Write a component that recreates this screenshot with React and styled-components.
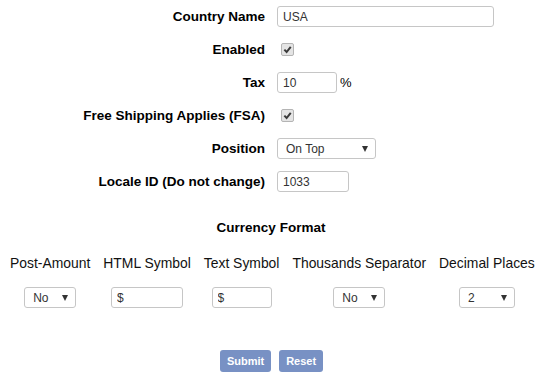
import styled, { createGlobalStyle } from "styled-components";

const Global = createGlobalStyle`
  body {
    margin: 0;
    background: #ffffff;
    color: #000000;
    font-family: "Liberation Sans", Arial, sans-serif;
  }
`;

export default function App() {
    return (
        <Page>
            <Global />
            <FieldGrid>
                <Label>Country Name</Label>
                <Control>
                    <TextInput $w={217} defaultValue="USA" />
                </Control>

                <Label>Enabled</Label>
                <Control>
                    <CheckBox />
                </Control>

                <Label>Tax</Label>
                <Control>
                    <TextInput $w={60} defaultValue="10" />
                    <Unit>%</Unit>
                </Control>

                <Label>Free Shipping Applies (FSA)</Label>
                <Control>
                    <CheckBox />
                </Control>

                <Label>Position</Label>
                <Control>
                    <Dropdown $w={99} value="On Top" options={["On Top", "On Bottom"]} />
                </Control>

                <Label>Locale ID (Do not change)</Label>
                <Control>
                    <TextInput $w={72} defaultValue="1033" />
                </Control>
            </FieldGrid>

            <SectionTitle>Currency Format</SectionTitle>

            <Columns>
                <Column>
                    <ColumnTitle>Post-Amount</ColumnTitle>
                    <Dropdown $w={52} value="No" options={["No", "Yes"]} />
                </Column>
                <Column>
                    <ColumnTitle>HTML Symbol</ColumnTitle>
                    <TextInput $w={72} defaultValue="$" />
                </Column>
                <Column>
                    <ColumnTitle>Text Symbol</ColumnTitle>
                    <TextInput $w={60} defaultValue="$" />
                </Column>
                <Column>
                    <ColumnTitle>Thousands Separator</ColumnTitle>
                    <Dropdown $w={52} value="No" options={["No", "Yes"]} />
                </Column>
                <Column>
                    <ColumnTitle>Decimal Places</ColumnTitle>
                    <Dropdown $w={56} value="2" options={["0", "1", "2", "3"]} />
                </Column>
            </Columns>

            <Actions>
                <Button type="submit">Submit</Button>
                <Button type="reset">Reset</Button>
            </Actions>
        </Page>
    );
}

function CheckBox() {
    return (
        <CheckBoxBox>
            <svg width="9" height="9" viewBox="0 0 10 10">
                <path d="M1.5 5.2 L4 7.8 L8.6 2" fill="none" stroke="#3a3a3a" strokeWidth="2.2" />
            </svg>
        </CheckBoxBox>
    );
}

function Dropdown({ $w, value, options }) {
    return (
        <SelectWrap $w={$w}>
            <Select defaultValue={value}>
                {options.map((o) => (
                    <option key={o}>{o}</option>
                ))}
            </Select>
        </SelectWrap>
    );
}

const Page = styled.div`
    width: 539px;
    height: 376px;
    overflow: hidden;
`;

const FieldGrid = styled.div`
    display: grid;
    grid-template-columns: 1fr 1fr;
    grid-auto-rows: 33px;
    column-gap: 12px;
    align-items: center;
    padding-left: 3px;
`;

const Label = styled.div`
    text-align: right;
    font-size: 13.5px;
    font-weight: bold;
    color: #000000;
`;

const Control = styled.div`
    display: flex;
    align-items: center;
    gap: 3px;
`;

const TextInput = styled.input`
    box-sizing: border-box;
    width: ${(p) => p.$w}px;
    height: 21px;
    margin: 0;
    padding: 0 5px;
    border: 1px solid #c6c6c6;
    border-radius: 3px;
    background: #ffffff;
    font-family: "Liberation Sans", Arial, sans-serif;
    font-size: 12px;
    color: #333333;
    outline: none;
`;

const Unit = styled.span`
    font-size: 13px;
    color: #000000;
`;

const CheckBoxBox = styled.span`
    box-sizing: border-box;
    display: inline-flex;
    align-items: center;
    justify-content: center;
    width: 13px;
    height: 13px;
    margin-left: 4px;
    border: 1px solid #b4b4b4;
    border-radius: 2px;
    background: #e4e4e4;
`;

const SelectWrap = styled.div`
    position: relative;
    width: ${(p) => p.$w}px;

    &::after {
        content: "";
        position: absolute;
        right: 8px;
        top: 8px;
        border-left: 3.5px solid transparent;
        border-right: 3.5px solid transparent;
        border-top: 6px solid #333333;
        pointer-events: none;
    }
`;

const Select = styled.select`
    appearance: none;
    box-sizing: border-box;
    display: block;
    width: 100%;
    height: 21px;
    margin: 0;
    padding: 0 0 0 8px;
    border: 1px solid #c6c6c6;
    border-radius: 3px;
    background: #ffffff;
    font-family: "Liberation Sans", Arial, sans-serif;
    font-size: 12px;
    color: #333333;
    outline: none;
`;

const SectionTitle = styled.div`
    margin-top: 22px;
    padding-left: 3px;
    text-align: center;
    font-size: 13.5px;
    font-weight: bold;
    line-height: 16px;
`;

const Columns = styled.div`
    display: flex;
    gap: 1px;
    margin-top: 19px;
    padding-left: 4px;
`;

const Column = styled.div`
    display: flex;
    flex-direction: column;
    align-items: center;
    gap: 16px;
    padding: 0 6px;
`;

const ColumnTitle = styled.div`
    font-size: 13.9px;
    line-height: 16px;
    color: #111111;
    white-space: nowrap;
`;

const Actions = styled.div`
    display: flex;
    justify-content: center;
    gap: 8px;
    margin-top: 42px;
    padding-left: 4px;
`;

const Button = styled.button`
    height: 22px;
    padding: 0 7px;
    border: none;
    border-radius: 3px;
    background: #7891c4;
    color: #ffffff;
    font-family: "Liberation Sans", Arial, sans-serif;
    font-size: 11px;
    font-weight: bold;
`;
